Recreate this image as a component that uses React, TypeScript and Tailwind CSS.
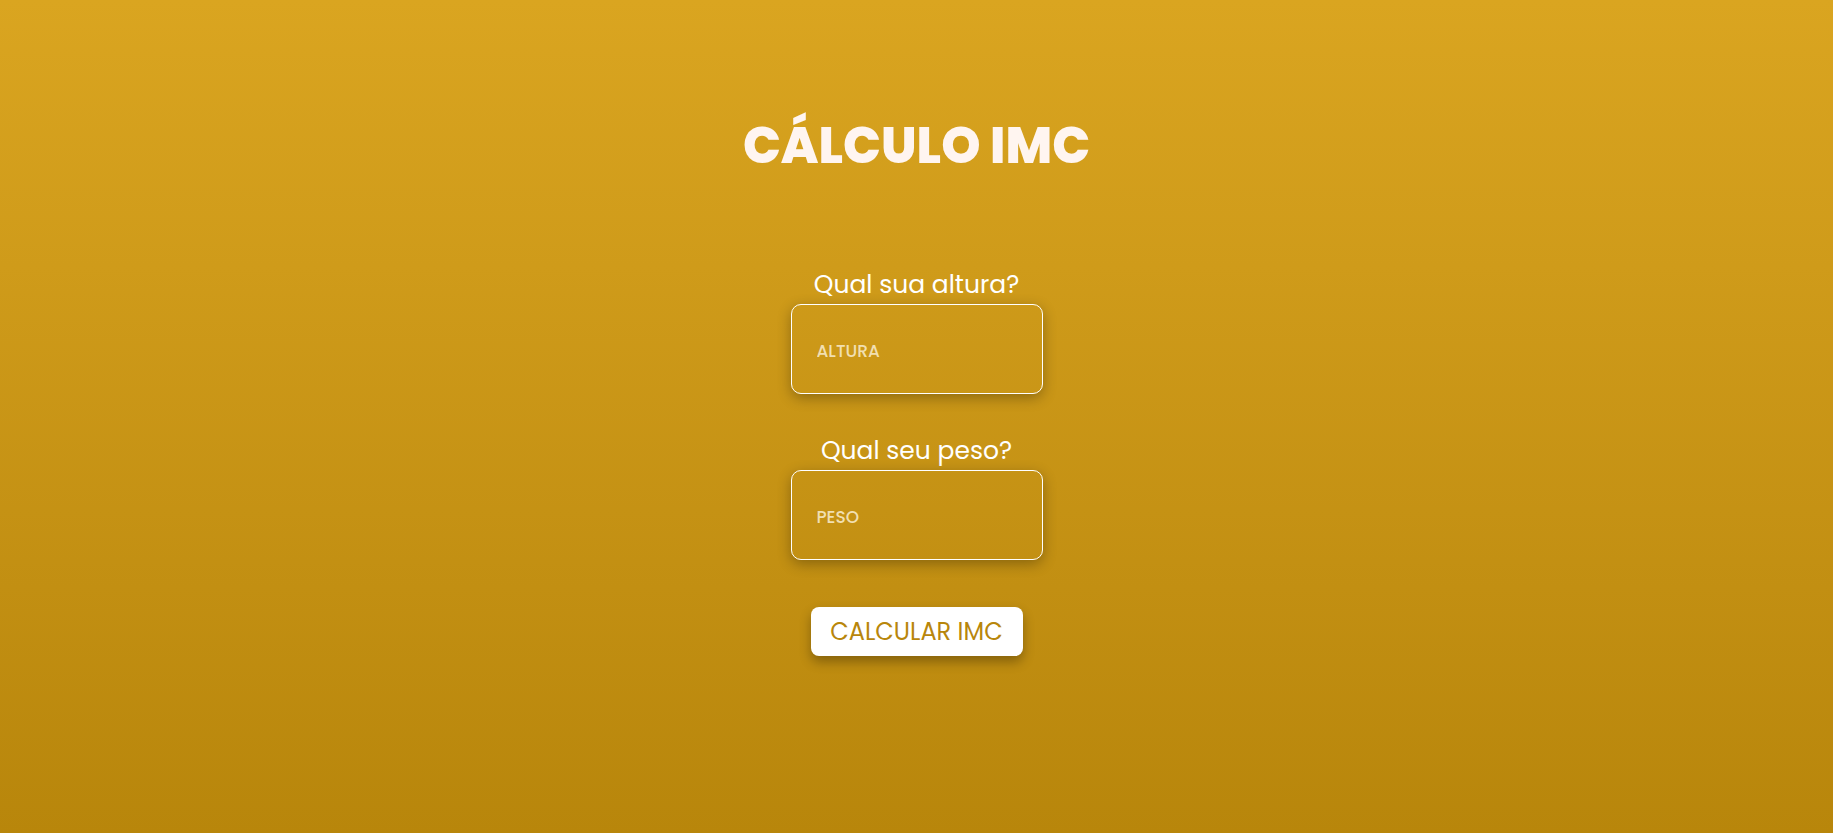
export default function App() {
  return (
    <div className="min-h-screen w-full bg-gradient-to-b from-[#daa520] to-[#b8860b] font-['Poppins','Inter',sans-serif] flex flex-col items-center">
      <h1 className="mt-[115px] text-[50px] leading-[62px] font-extrabold text-[#fff5f0]">CÁLCULO IMC</h1>

      <div className="mt-[93px] flex flex-col items-center">
        <label htmlFor="altura" className="text-[25px] leading-[30px] text-white font-normal">Qual sua altura?</label>
        <input
          id="altura"
          type="text"
          placeholder="ALTURA"
          className="mt-[4px] w-[252px] h-[90px] rounded-[10px] border border-white bg-transparent px-[25px] pt-[4px] text-[17px] font-medium text-white placeholder:text-[#f1dfb0] shadow-[0_4px_14px_rgba(0,0,0,0.3)] outline-none"
        />
      </div>

      <div className="mt-[42px] flex flex-col items-center">
        <label htmlFor="peso" className="text-[25px] leading-[30px] text-white font-normal">Qual seu peso?</label>
        <input
          id="peso"
          type="text"
          placeholder="PESO"
          className="mt-[4px] w-[252px] h-[90px] rounded-[10px] border border-white bg-transparent px-[25px] pt-[4px] text-[17px] font-medium text-white placeholder:text-[#f1dfb0] shadow-[0_4px_14px_rgba(0,0,0,0.3)] outline-none"
        />
      </div>

      <button className="mt-[47px] w-[212px] h-[49px] rounded-[8px] bg-white text-[#b8860b] text-[24px] font-normal shadow-[0_6px_12px_rgba(0,0,0,0.3)]">
        CALCULAR IMC
      </button>
    </div>
  );
}
